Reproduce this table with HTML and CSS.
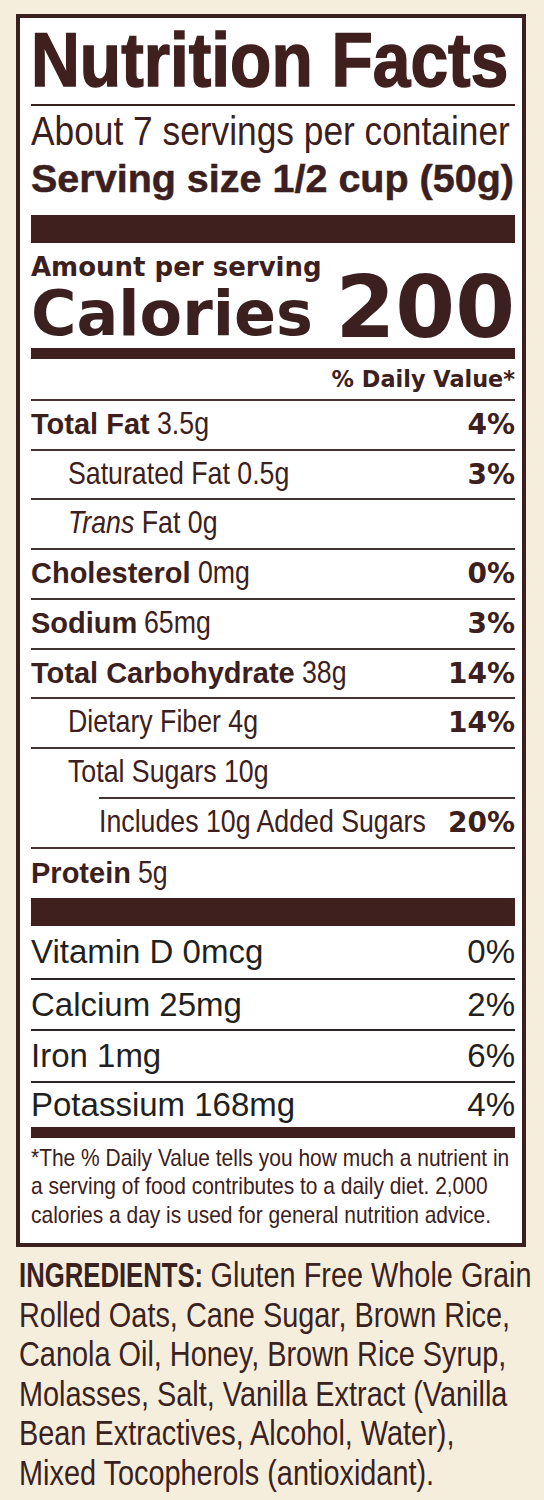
FILE: index.html
```html
<!DOCTYPE html>
<html lang="en">
<head>
    <meta charset="UTF-8">
    <meta name="viewport" content="width=device-width, initial-scale=1.0">
    <title>Nutrition Facts</title>
    <link rel="stylesheet" href="styles.css">
</head>
<body>
    <div class="label">
        <h1 class="title"><span>Nutrition Facts</span></h1>
        <div class="servings">About 7 servings per container</div>
        <div class="serving-size">Serving size 1/2 cup (50g)</div>

        <div class="bar bar-thick"></div>

        <!-- Calories block -->
        <div class="calories">
            <div>
                <div class="amount">Amount per serving</div>
                <div class="cal-label">Calories</div>
            </div>
            <div class="cal-value">200</div>
        </div>

        <div class="bar bar-mid"></div>
        <div class="dv-head">% Daily Value*</div>

        <div class="row"><span class="name"><b>Total Fat</b><span class="v sp">3.5g</span></span><span class="pct">4%</span></div>
        <div class="row"><span class="name indent"><span class="v">Saturated Fat 0.5g</span></span><span class="pct">3%</span></div>
        <div class="row"><span class="name indent"><span class="v"><i>Trans</i> Fat 0g</span></span></div>
        <div class="row"><span class="name"><b>Cholesterol</b><span class="v sp">0mg</span></span><span class="pct">0%</span></div>
        <div class="row"><span class="name"><b>Sodium</b><span class="v sp">65mg</span></span><span class="pct">3%</span></div>
        <div class="row"><span class="name"><b>Total Carbohydrate</b><span class="v sp">38g</span></span><span class="pct">14%</span></div>
        <div class="row"><span class="name indent"><span class="v">Dietary Fiber 4g</span></span><span class="pct">14%</span></div>
        <div class="row"><span class="name indent"><span class="v">Total Sugars 10g</span></span></div>
        <div class="row row-sub"><span class="name"><span class="v">Includes 10g Added Sugars</span></span><span class="pct">20%</span></div>
        <div class="row row-protein"><span class="name"><b>Protein</b><span class="v sp">5g</span></span></div>

        <div class="bar bar-thick"></div>

        <!-- Vitamins and minerals -->
        <div class="vit vit-first"><span>Vitamin D 0mcg</span><span>0%</span></div>
        <div class="vit"><span>Calcium 25mg</span><span>2%</span></div>
        <div class="vit"><span>Iron 1mg</span><span>6%</span></div>
        <div class="vit vit-last"><span>Potassium 168mg</span><span>4%</span></div>

        <div class="bar bar-foot"></div>
        <p class="footnote">*The % Daily Value tells you how much a nutrient in<br>a serving of food contributes to a daily diet. 2,000<br>calories a day is used for general nutrition advice.</p>
    </div>

    <p class="ingredients"><b>INGREDIENTS:</b> Gluten Free Whole Grain<br>Rolled Oats, Cane Sugar, Brown Rice,<br>Canola Oil, Honey, Brown Rice Syrup,<br>Molasses, Salt, Vanilla Extract (Vanilla<br>Bean Extractives, Alcohol, Water),<br>Mixed Tocopherols (antioxidant).</p>
</body>
</html>
```

FILE: styles.css
```css
body {
    margin: 0;
    background: #f6eedc;
    color: #3c2020;
    font-family: 'Liberation Sans', Arial, sans-serif;
}

.label {
    box-sizing: border-box;
    width: 510px;
    margin: 14px 0 0 16px;
    padding: 3px 7px 0 11px;
    background: #fff;
    border: 4px solid #3b2020;
}

/* condensed type: the label face is a narrow grotesque */
.title span,
.servings,
.footnote,
.ingredients,
.ingredients b,
.v {
    transform-origin: left center;
}

.title {
    margin: 0;
    padding-bottom: 5px;
    border-bottom: 2px solid #3b2020;
    font-size: 76px;
    line-height: 78px;
    font-weight: bold;
    color: #40201f;
    white-space: nowrap;
}

.title span {
    display: inline-block;
    transform: scaleX(0.89);
    -webkit-text-stroke: 1.5px #40201f;
}

.servings {
    margin-top: 3px;
    font-size: 41px;
    line-height: 44px;
    white-space: nowrap;
    transform: scaleX(0.861);
}

.serving-size {
    margin-top: 4.4px;
    font-size: 39.5px;
    line-height: 42px;
    font-weight: bold;
    white-space: nowrap;
    -webkit-text-stroke: 0.5px #3c2020;
}

.bar {
    background: #40201f;
}

.bar-thick {
    height: 28px;
}

.serving-size + .bar-thick {
    margin-top: 15.5px;
}

.bar-mid {
    height: 11px;
    margin-top: 5.5px;
}

.bar-foot {
    height: 11px;
}

.calories {
    display: flex;
    justify-content: space-between;
    align-items: flex-end;
    margin-top: 11px;
    font-family: 'DejaVu Sans', sans-serif;
    font-weight: bold;
}

.amount {
    font-size: 26px;
    line-height: 26px;
}

.cal-label {
    margin-top: 6.5px;
    font-size: 62px;
    line-height: 56px;
}

.cal-value {
    font-size: 86px;
    line-height: 70.5px;
}

.dv-head {
    text-align: right;
    font-family: 'DejaVu Sans', sans-serif;
    font-weight: bold;
    font-size: 22.4px;
    line-height: 40px;
}

.row {
    display: flex;
    justify-content: space-between;
    align-items: baseline;
    height: 47.78px;
    line-height: 47.78px;
    border-top: 2px solid #433333;
    font-size: 29px;
    white-space: nowrap;
}

.row .name {
    min-width: 0;
}

.row b {
    font-size: 29px;
}

.v {
    display: inline-block;
    font-size: 32px;
    line-height: 1;
    transform: scaleX(0.835);
}

.v.sp {
    margin-left: 7px;
}

.row .pct {
    font-family: 'DejaVu Sans', sans-serif;
    font-weight: bold;
    font-size: 28px;
}

.indent {
    padding-left: 37px;
}

.row-sub {
    margin-left: 68px;
}

.row-protein {
    height: 49px;
    line-height: 49px;
}

.vit {
    display: flex;
    justify-content: space-between;
    height: 49.5px;
    line-height: 49.5px;
    border-top: 2px solid #2a2424;
    font-size: 33px;
    color: #231f20;
}

.vit-first {
    border-top: none;
    height: 52px;
    line-height: 52px;
}

.vit-last {
    height: 44px;
    line-height: 44px;
}

.footnote {
    margin: 0;
    padding: 6px 0 13.5px;
    font-size: 24px;
    line-height: 28.5px;
    white-space: nowrap;
    transform: scaleX(0.873);
}

.ingredients {
    margin: 9.3px 0 0 19px;
    font-size: 34.6px;
    line-height: 39.5px;
    color: #3a2220;
    white-space: nowrap;
    transform: scaleX(0.835);
}

.ingredients b {
    display: inline-block;
    margin-right: -28px;
    transform: scaleX(0.89);
}
```
